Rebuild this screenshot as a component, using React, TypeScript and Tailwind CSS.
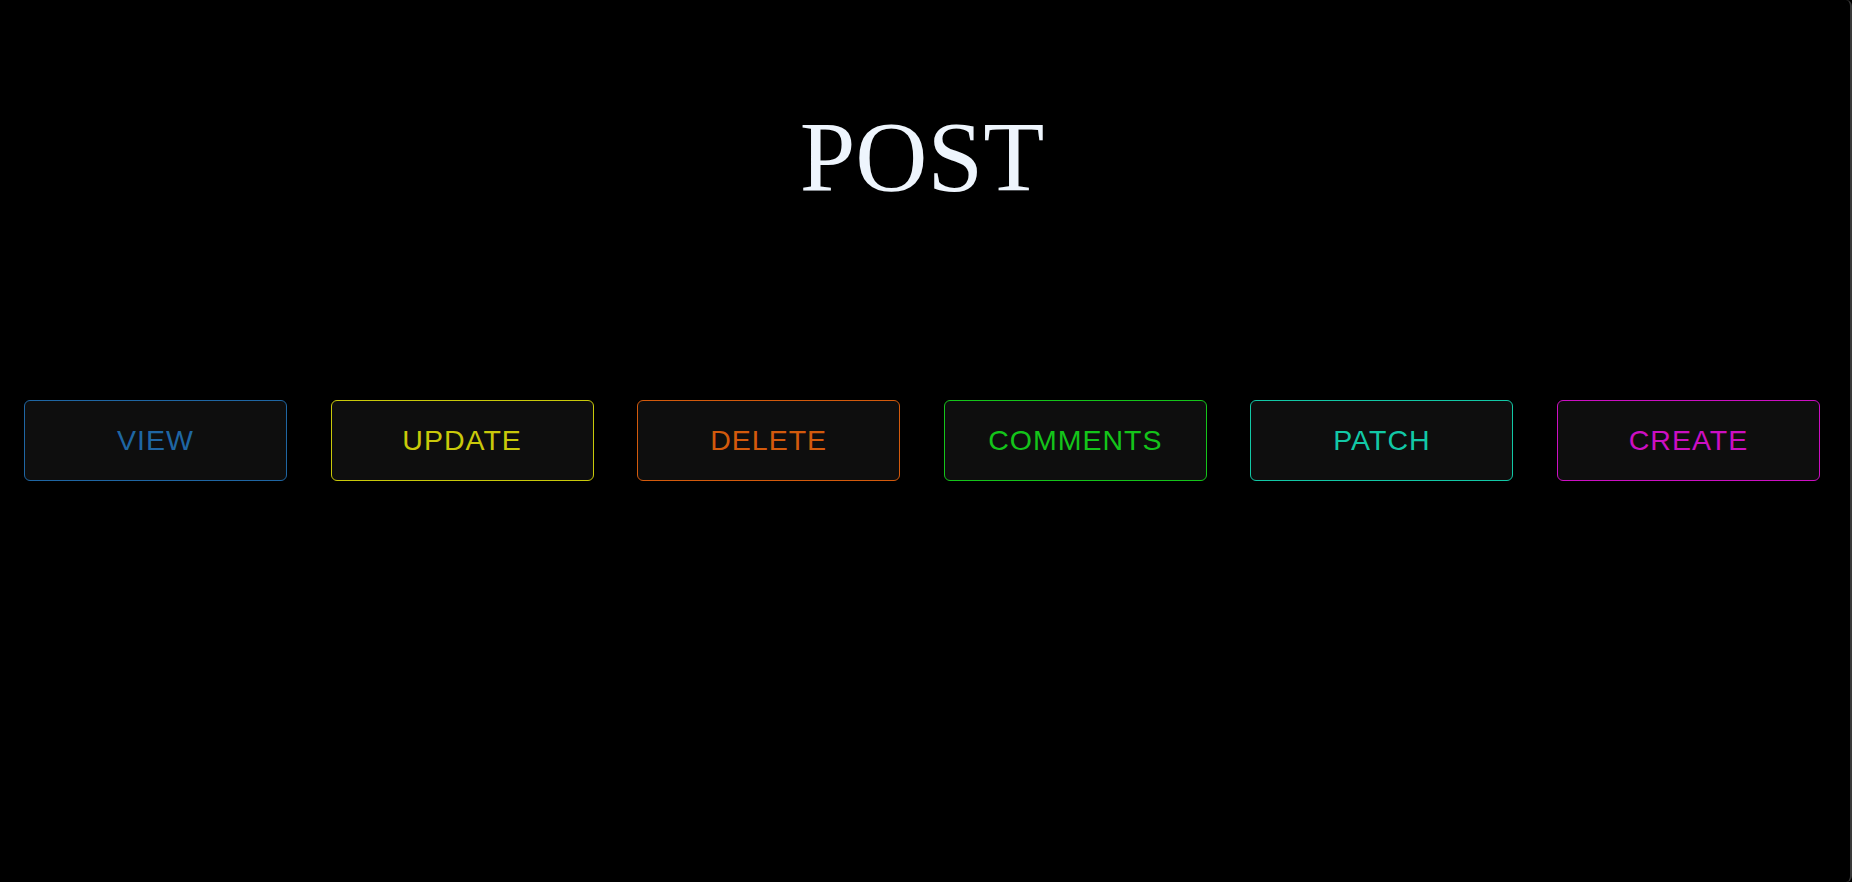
import React from 'react';

const actions = [
  { label: 'VIEW', cls: 'text-[#1f66a3] border-[#1f66a3]' },
  { label: 'UPDATE', cls: 'text-[#c9c90a] border-[#c9c90a]' },
  { label: 'DELETE', cls: 'text-[#d35a0c] border-[#d35a0c]' },
  { label: 'COMMENTS', cls: 'text-[#14c41a] border-[#14c41a]' },
  { label: 'PATCH', cls: 'text-[#12c8a6] border-[#12c8a6]' },
  { label: 'CREATE', cls: 'text-[#cc0fc2] border-[#cc0fc2]' },
];

export default function App() {
  return (
    <div className="h-[882px] w-full bg-black overflow-hidden">
      {/* page frame, thin edge on the right */}
      <div className="h-full w-full rounded-r-md border-r-2 border-[#3a3a3a] flex flex-col">
        <h1
          className="mt-[107px] pr-[6px] text-center text-[100px] leading-none text-[#eef5fd]"
          style={{ fontFamily: '"Liberation Serif", "Times New Roman", serif' }}
        >
          POST
        </h1>

        <div className="mt-[193px] flex justify-between pl-6 pr-[30px]">
          {actions.map((a) => (
            <button
              key={a.label}
              className={`h-[81px] w-[263px] rounded-md border bg-[#0e0e0e] text-[28.5px] tracking-[1px] ${a.cls}`}
              style={{ fontFamily: '"Liberation Sans", Arial, sans-serif' }}
            >
              {a.label}
            </button>
          ))}
        </div>
      </div>
    </div>
  );
}
